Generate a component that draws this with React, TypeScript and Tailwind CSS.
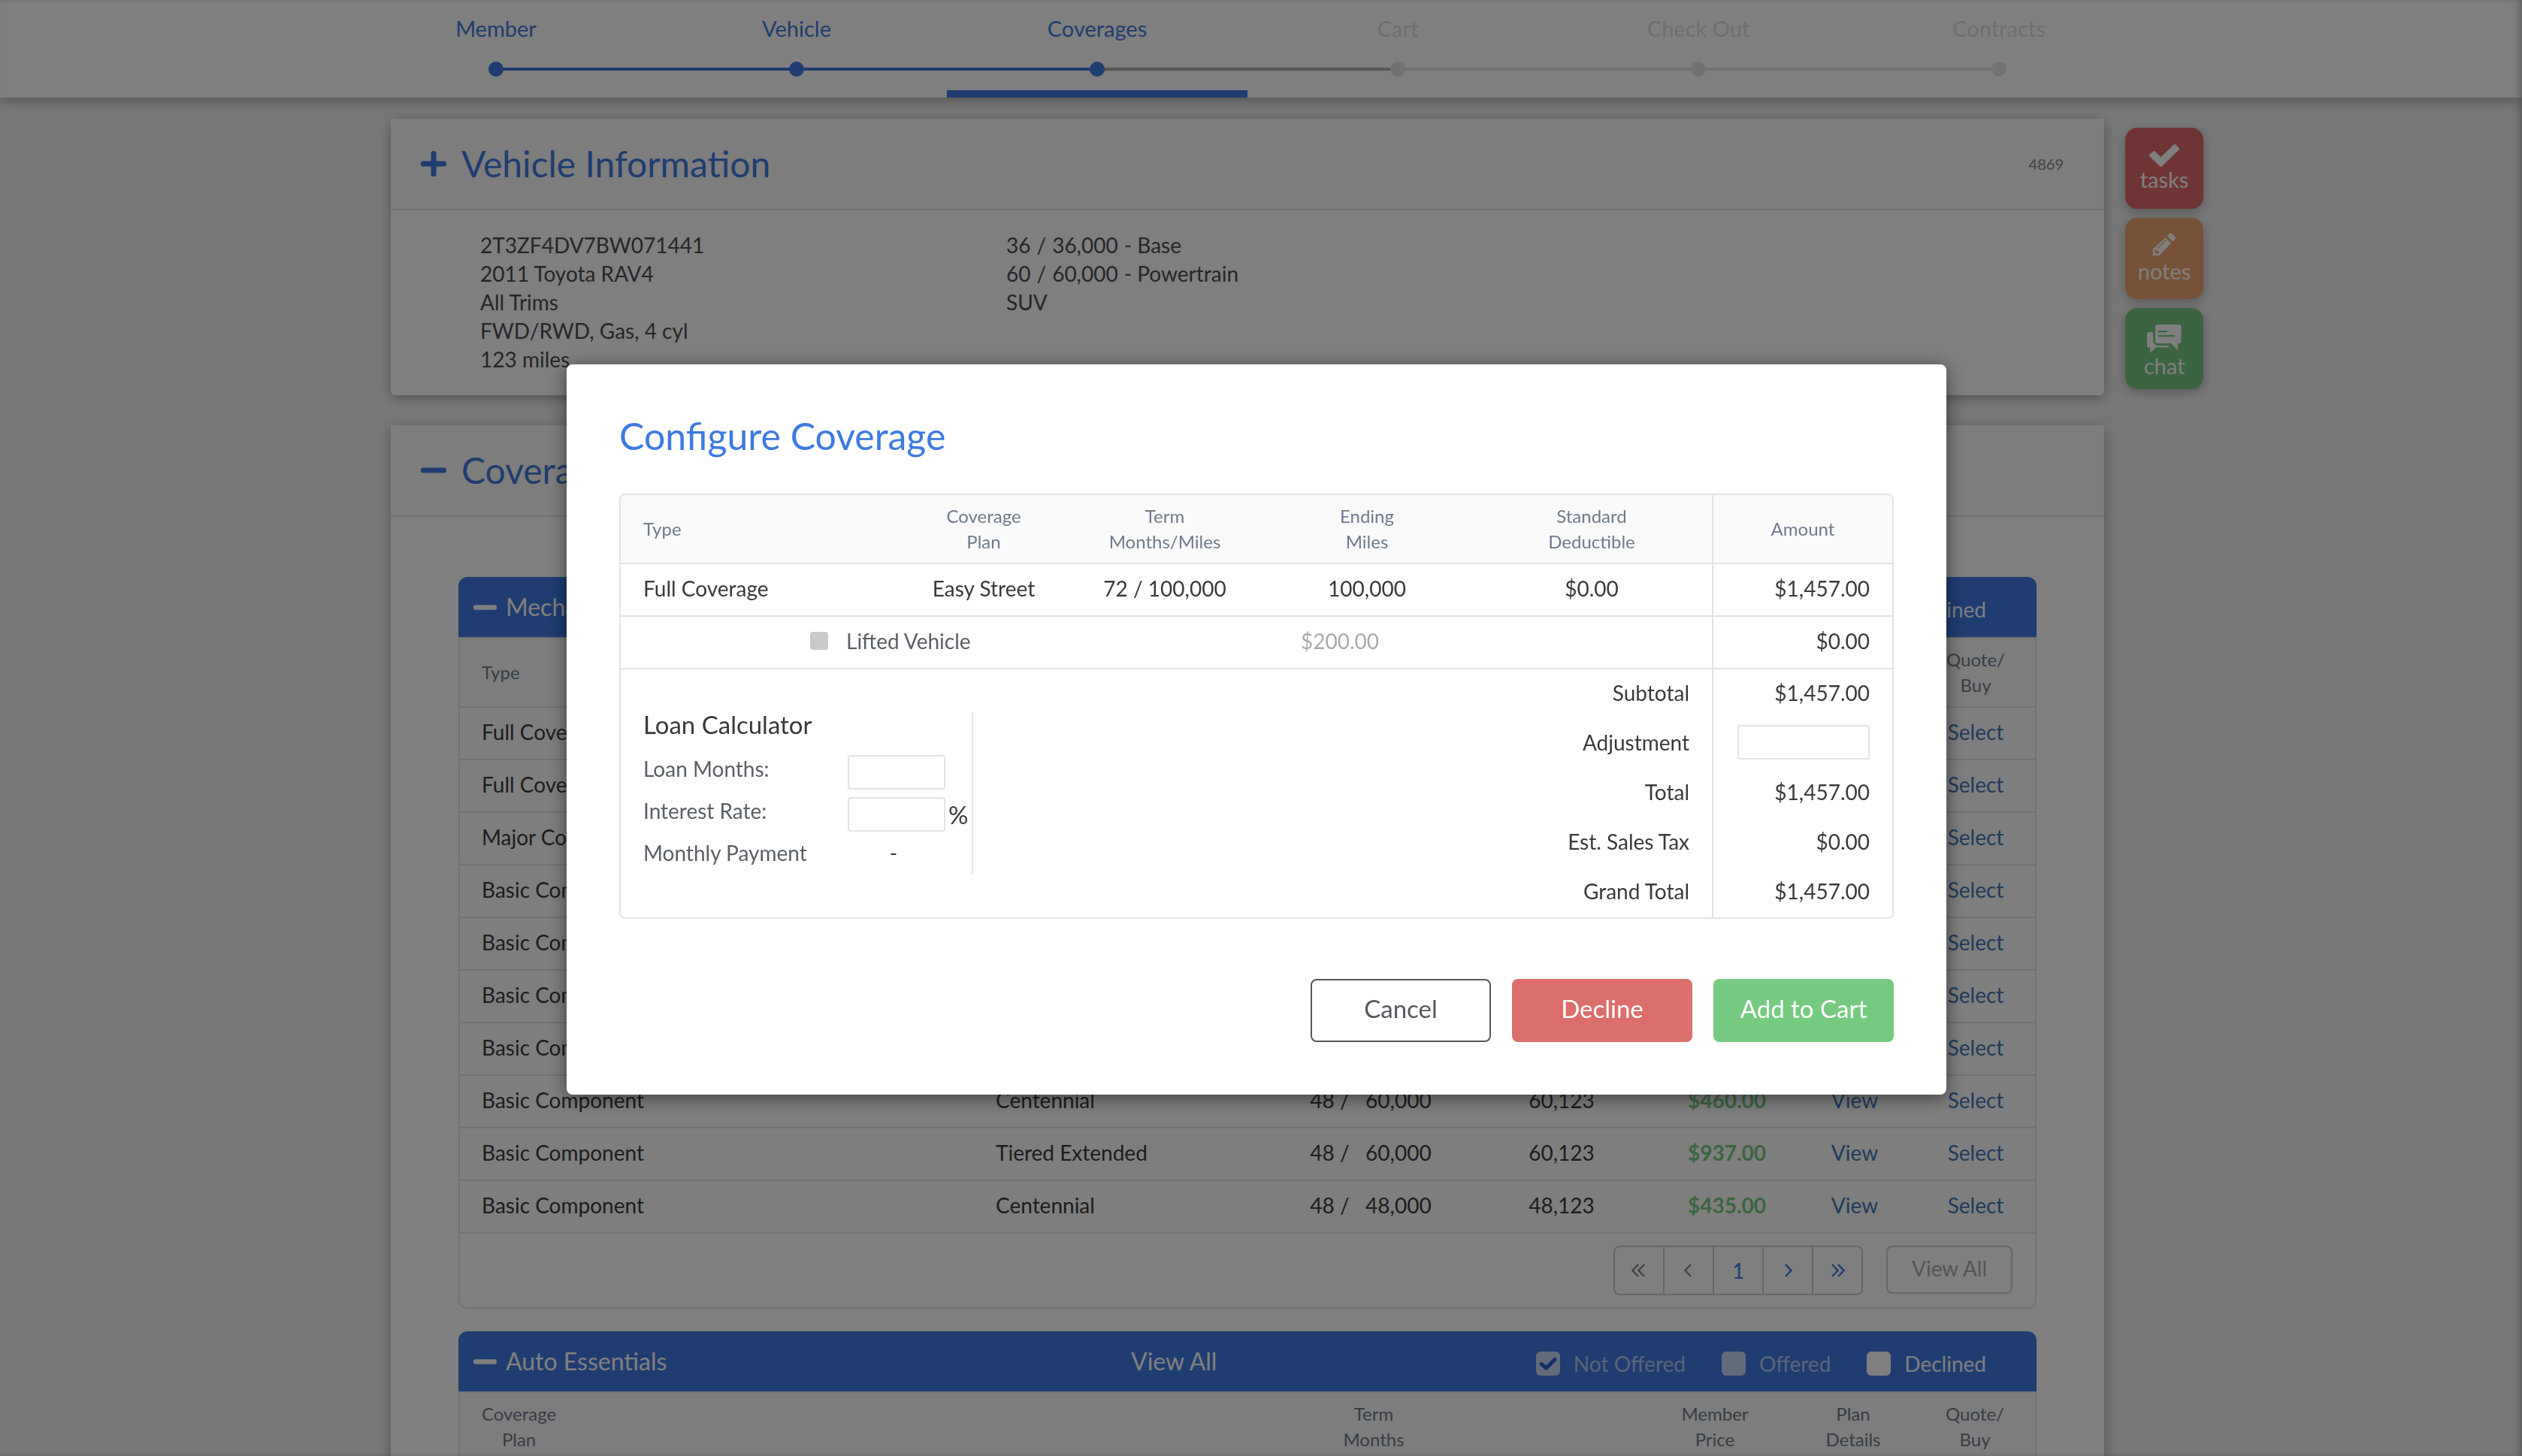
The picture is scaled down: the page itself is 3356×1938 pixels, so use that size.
import React from "react";

const STEPS = [
  { label: "Member", state: "done" },
  { label: "Vehicle", state: "done" },
  { label: "Coverages", state: "current" },
  { label: "Cart", state: "next" },
  { label: "Check Out", state: "todo" },
  { label: "Contracts", state: "todo" },
];

const STEP_LINE: Record<string, string> = {
  done: "bg-[#3e7ae0]",
  current: "bg-[#3e7ae0]",
  next: "bg-[#a8a8a8]",
  todo: "bg-[#e4e4e4]",
};

function Stepper() {
  return (
    <header className="relative z-10 bg-white pr-9 shadow-[0_4px_16px_rgba(0,0,0,0.3)]">
      <nav aria-label="Progress">
        <ol className="mx-auto grid h-[130px] w-full max-w-[2400px] grid-cols-6">
          {STEPS.map((s, i) => {
            const active = s.state === "done" || s.state === "current";
            return (
              <li key={s.label} className="relative flex flex-col items-center pt-5">
                <a
                  href="#"
                  className={`text-[29px] leading-[36px] ${active ? "text-[#3e7ae0]" : "text-[#dedede]"}`}
                >
                  {s.label}
                </a>
                {i > 0 && (
                  <span className={`absolute right-1/2 top-[90px] h-1 w-full ${STEP_LINE[s.state]}`} />
                )}
                <span
                  className={`absolute top-[82px] z-10 size-5 rounded-full ${active ? "bg-[#3e7ae0]" : "bg-[#e4e4e4]"}`}
                />
                {s.state === "current" && (
                  <span className="absolute inset-x-0 bottom-0 h-[10px] bg-[#3e7ae0]" />
                )}
              </li>
            );
          })}
        </ol>
      </nav>
    </header>
  );
}

function PlusIcon() {
  return (
    <svg viewBox="0 0 34 34" className="size-[34px]" fill="currentColor" aria-hidden="true">
      <rect x="0" y="13.5" width="34" height="7" rx="3" />
      <rect x="13.5" y="0" width="7" height="34" rx="3" />
    </svg>
  );
}

function MinusIcon({ className }: { className: string }) {
  return (
    <svg viewBox="0 0 34 34" className={className} fill="currentColor" aria-hidden="true">
      <rect x="0" y="13.5" width="34" height="7" rx="3" />
    </svg>
  );
}

function CardHeader({ open, title, note }: { open: boolean; title: string; note?: string }) {
  return (
    <div className="flex h-[122px] items-center justify-between border-b-2 border-[#e4e4e4] bg-[#fbfbfb] pl-10 pr-[54px]">
      <h2 className="text-[#3e7ae0]">
        <button type="button" className="flex items-center gap-5 text-[48px] leading-[60px]">
          {open ? <MinusIcon className="size-[34px]" /> : <PlusIcon />}
          {title}
        </button>
      </h2>
      {note && <span className="text-[20px] text-[#8a8a8a]">{note}</span>}
    </div>
  );
}

function VehicleCard() {
  return (
    <section className="rounded-b-md bg-white shadow-[0_4px_16px_rgba(0,0,0,0.3)]">
      <CardHeader open={false} title="Vehicle Information" note="4869" />
      <div className="flex pb-[29px] pl-[119px] pt-[27px] text-[28px] leading-[38px] text-[#4a4d52]">
        <div className="w-[700px]">
          <p>2T3ZF4DV7BW071441</p>
          <p>2011 Toyota RAV4</p>
          <p>All Trims</p>
          <p>FWD/RWD, Gas, 4 cyl</p>
          <p>123 miles</p>
        </div>
        <div>
          <p className="flex gap-2"><span>36</span><span>/</span><span>36,000</span><span>- Base</span></p>
          <p className="flex gap-2"><span>60</span><span>/</span><span>60,000</span><span>- Powertrain</span></p>
          <p>SUV</p>
        </div>
      </div>
    </section>
  );
}

function Filter({ label, checked, muted }: { label: string; checked?: boolean; muted?: boolean }) {
  return (
    <label className="flex items-center gap-[18px] text-[28px] leading-[36px] text-white">
      <span className={`grid size-8 ${muted ? "opacity-70" : ""}`}>
        <input
          type="checkbox"
          defaultChecked={checked}
          className="col-start-1 row-start-1 size-8 appearance-none rounded-md bg-white"
        />
        {checked && (
          <svg viewBox="0 0 32 32" className="z-10 col-start-1 row-start-1 size-8 text-[#1f5ac4]" aria-hidden="true">
            <path d="M7 16.500l6.500 5.500L25 10.500" fill="none" stroke="currentColor" strokeWidth="5" strokeLinecap="round" strokeLinejoin="round" />
          </svg>
        )}
      </span>
      <span className={muted ? "opacity-60" : ""}>{label}</span>
    </label>
  );
}

function PanelHeader({ title }: { title: string }) {
  return (
    <div className="grid h-20 grid-cols-[875px_1fr_auto] items-center rounded-t-xl bg-[#3e7ae0] pl-5 pr-[67px] text-white">
      <h3>
        <button type="button" className="flex items-center gap-3 text-[32px] leading-[40px]">
          <MinusIcon className="size-[31px]" />
          {title}
        </button>
      </h3>
      <div>
        <a href="#" className="text-[32px] leading-[40px]">View All</a>
      </div>
      <div className="flex gap-12 pt-1.5">
        <Filter label="Not Offered" checked muted />
        <Filter label="Offered" muted />
        <Filter label="Declined" />
      </div>
    </div>
  );
}

type Row = { type: string; plan?: string; months?: string; miles?: string; end?: string; price?: string };

const ROWS: Row[] = [
  { type: "Full Coverage" },
  { type: "Full Coverage" },
  { type: "Major Component" },
  { type: "Basic Component" },
  { type: "Basic Component" },
  { type: "Basic Component" },
  { type: "Basic Component" },
  { type: "Basic Component", plan: "Centennial", months: "48", miles: "60,000", end: "60,123", price: "$460.00" },
  { type: "Basic Component", plan: "Tiered Extended", months: "48", miles: "60,000", end: "60,123", price: "$937.00" },
  { type: "Basic Component", plan: "Centennial", months: "48", miles: "48,000", end: "48,123", price: "$435.00" },
];

const HEAD = "h-[92px] border-b-2 border-[#e4e4e4] bg-[#fbfbfb] p-0 text-[24px] font-normal leading-[34px] text-[#6f7b8c]";
const CELL = "h-[70px] border-b-2 border-[#e4e4e4] p-0 pb-1 text-[28px] leading-[36px]";
const PAGE = "flex h-full w-[66px] items-center justify-center border-l-2 border-[#cfcfcf] first:w-16 first:border-l-0";

const CHEVRONS = {
  first: "M13 6 5.500 14 13 22M21 6 13.500 14 21 22",
  previous: "M17 6 9.500 14 17 22",
  next: "M11 6 18.500 14 11 22",
  last: "M7 6 14.500 14 7 22M15 6 22.500 14 15 22",
};

function Chevron({ kind }: { kind: keyof typeof CHEVRONS }) {
  return (
    <svg viewBox="0 0 28 28" className="size-7" fill="none" stroke="currentColor" strokeWidth="2.500" aria-hidden="true">
      <path d={CHEVRONS[kind]} />
    </svg>
  );
}

function TwoLine({ a, b }: { a: string; b: string }) {
  return (
    <span className="inline-block text-center">
      {a}
      <br />
      {b}
    </span>
  );
}

function MechanicalPanel() {
  return (
    <div>
      <PanelHeader title="Mechanical" />
      <div className="overflow-hidden rounded-b-xl border-2 border-[#e4e4e4]">
        <table className="w-full table-fixed border-separate border-spacing-0 text-[#3a3a3a]">
          <colgroup>
            <col />
            <col className="w-[404px]" />
            <col className="w-[244px]" />
            <col className="w-[264px]" />
            <col className="w-[176px]" />
            <col className="w-[164px]" />
            <col className="w-[158px]" />
          </colgroup>
          <thead>
            <tr>
              <th className={`${HEAD} pl-[29px] text-left`}>Type</th>
              <th className={HEAD}></th>
              <th className={HEAD}></th>
              <th className={HEAD}></th>
              <th className={HEAD}></th>
              <th className={HEAD}></th>
              <th className={HEAD}><TwoLine a="Quote/" b="Buy" /></th>
            </tr>
          </thead>
          <tbody>
            {ROWS.map((r, i) => (
              <tr key={i} className="bg-[#fdfdfd]">
                <td className={`${CELL} pl-[29px]`}>{r.type}</td>
                <td className={`${CELL} pl-[27px]`}>{r.plan}</td>
                <td className={`${CELL} whitespace-pre text-center`}>{r.months && `${r.months} /   ${r.miles}`}</td>
                <td className={`${CELL} text-center`}>{r.end}</td>
                <td className={`${CELL} text-center font-bold text-[#77cb80]`}>{r.price}</td>
                <td className={`${CELL} text-center text-[#3f77b8]`}>{r.plan && <a href="#">View</a>}</td>
                <td className={`${CELL} text-center text-[#3f77b8]`}><a href="#">Select</a></td>
              </tr>
            ))}
          </tbody>
        </table>
        <div className="flex h-[98px] justify-end gap-[31px] bg-white pr-[30px] pt-4">
          <div className="flex h-[66px] overflow-hidden rounded-lg border-2 border-[#cfcfcf] text-[28px] text-[#3e7ae0]">
            <button type="button" aria-label="First page" className={`${PAGE} text-[#8a8a8a]`}><Chevron kind="first" /></button>
            <button type="button" aria-label="Previous page" className={`${PAGE} text-[#8a8a8a]`}><Chevron kind="previous" /></button>
            <button type="button" className={PAGE}>1</button>
            <button type="button" aria-label="Next page" className={PAGE}><Chevron kind="next" /></button>
            <button type="button" aria-label="Last page" className={PAGE}><Chevron kind="last" /></button>
          </div>
          <button type="button" className="h-16 w-[168px] rounded-lg border-2 border-[#cfcfcf] pb-1 text-[28px] text-[#ababab]">
            View All
          </button>
        </div>
      </div>
    </div>
  );
}

function EssentialsPanel() {
  return (
    <div>
      <PanelHeader title="Auto Essentials" />
      <div className="border-2 border-[#e4e4e4]">
        <table className="w-full table-fixed border-separate border-spacing-0">
          <colgroup>
            <col />
            <col className="w-[244px]" />
            <col className="w-[230px]" />
            <col className="w-[204px]" />
            <col className="w-[164px]" />
            <col className="w-[160px]" />
          </colgroup>
          <thead>
            <tr>
              <th className={`${HEAD} pl-[29px] text-left`}><TwoLine a="Coverage" b="Plan" /></th>
              <th className={HEAD}><TwoLine a="Term" b="Months" /></th>
              <th className={HEAD}></th>
              <th className={HEAD}><TwoLine a="Member" b="Price" /></th>
              <th className={HEAD}><TwoLine a="Plan" b="Details" /></th>
              <th className={HEAD}><TwoLine a="Quote/" b="Buy" /></th>
            </tr>
          </thead>
        </table>
      </div>
    </div>
  );
}

const SIDE = "flex h-[108px] w-[104px] flex-col items-center justify-center rounded-2xl text-[29px] leading-[34px] text-white shadow-[0_4px_14px_rgba(0,0,0,0.25)]";

function SideButtons() {
  return (
    <aside className="flex flex-col gap-3 pl-7 pt-3">
      <button type="button" className={`${SIDE} bg-[#dc6b69]`}>
        <svg viewBox="0 0 40 30" className="h-[30px] w-10" fill="currentColor" aria-hidden="true">
          <path d="M.6 13.6 5 9.4a1.8 1.8 0 0 1 2.500 0L15.500 17 32.600.6a1.800 1.800 0 0 1 2.500 0L39.400 5a1.800 1.800 0 0 1 0 2.500L17 29.300a2 2 0 0 1-3 0L.6 16.200a1.800 1.800 0 0 1 0-2.600Z" />
        </svg>
        tasks
      </button>
      <button type="button" className={`${SIDE} bg-[#f0a56c]`}>
        <svg viewBox="0 0 30 30" className="mb-1 size-[30px]" fill="currentColor" aria-hidden="true">
          <path d="M21.500.9a2.500 2.500 0 0 1 3.500 0L29.200 5a2.500 2.500 0 0 1 0 3.500l-3 3-7.700-7.700Z" />
          <path
            fillRule="evenodd"
            d="M16.500 6.300 24 13.700 8.500 30H0v-8.500ZM17 8.500 5.500 20l1 1L18 9.500ZM2.500 22.500 2 26l2.500 1.800 4-.8-.5-2.500-2.500.2.200-2.200Z"
          />
        </svg>
        notes
      </button>
      <button type="button" className={`${SIDE} bg-[#77cb80]`}>
        <svg viewBox="0 0 46 38" className="mt-2 h-[38px] w-[46px]" fill="currentColor" aria-hidden="true">
          <path
            fillRule="evenodd"
            d="M14 0h28.500A3 3 0 0 1 45.500 3v19a3 3 0 0 1-3 3H41v9l-9-9H14a3 3 0 0 1-3-3V3a3 3 0 0 1 3-3Zm1 8v2.200h12V8Zm0 6v2.200h22V14Z"
          />
          <path d="M8 10H3a3 3 0 0 0-3 3v14.500a3 3 0 0 0 3 3h1V38l8-7.500h15a2 2 0 0 0 2-2V28H14a6 6 0 0 1-6-6Z" />
        </svg>
        chat
      </button>
    </aside>
  );
}

const M_HEAD = "h-[92px] border-b-2 border-[#e4e4e4] bg-[#fafafa] p-0 text-[24px] font-normal leading-[34px] text-[#6f7b8c]";
const M_CELL = "h-[70px] border-b-2 border-[#e4e4e4] p-0 pb-1 text-[28px] leading-[36px]";
const M_LABEL = "h-[66px] p-0 pb-1 pr-[30px] text-right text-[28px] font-normal leading-[36px]";
const M_AMOUNT = "h-[66px] border-l-2 border-[#e4e4e4] p-0 pb-1 pr-[30px] text-right text-[28px] leading-[36px]";
const FIELD = "h-[46px] rounded border-2 border-[#e4e4e4] bg-white px-2 text-[26px] outline-none";
const ACTION = "h-[84px] w-60 rounded-lg pb-1 text-[33px]";

function LoanCalculator() {
  return (
    <div className="mt-[57px] h-[216px] w-[469px] border-r-2 border-[#e4e4e4] pl-[30px] text-[28px] text-[#5a5f66]">
      <h3 className="pb-[25px] text-[33px] leading-[32px] text-[#3a3a3a]">Loan Calculator</h3>
      <div className="grid grid-cols-[272px_130px_auto] gap-y-[10px]">
        <label htmlFor="months" className="leading-[36px]">Loan Months:</label>
        <input id="months" type="text" className={FIELD} />
        <span />
        <label htmlFor="rate" className="leading-[36px]">Interest Rate:</label>
        <input id="rate" type="text" className={FIELD} />
        <span className="pl-1 text-[33px] leading-[46px] text-[#3a3a3a]">%</span>
        <span className="leading-[36px]">Monthly Payment</span>
        <span className="pr-2 text-center leading-[36px] text-[#3a3a3a]">-</span>
      </div>
    </div>
  );
}

function ConfigureModal() {
  return (
    <div className="fixed inset-0 z-20 flex items-center justify-center bg-black/50 pr-3 shadow-[inset_-6px_0_12px_-4px_rgba(0,0,0,0.3)]">
      <div
        role="dialog"
        aria-modal="true"
        aria-labelledby="modal-title"
        className="mt-1 w-[1836px] max-w-full rounded-lg bg-white px-[70px] pb-[70px] pt-[65px] shadow-[0_4px_24px_rgba(0,0,0,0.5)]"
      >
        <h2 id="modal-title" className="text-[50px] leading-[60px] text-[#3e7ae0]">Configure Coverage</h2>
        <div className="mt-[47px] overflow-hidden rounded-lg border-2 border-[#e4e4e4]">
          <table className="w-full table-fixed border-separate border-spacing-0 text-[#3a3a3a]">
            <colgroup>
              <col />
              <col className="w-[222px]" />
              <col className="w-[260px]" />
              <col className="w-[278px]" />
              <col className="w-[320px]" />
              <col className="w-[240px]" />
            </colgroup>
            <thead>
              <tr>
                <th className={`${M_HEAD} pl-[30px] text-left`}>Type</th>
                <th className={M_HEAD}><TwoLine a="Coverage" b="Plan" /></th>
                <th className={M_HEAD}><TwoLine a="Term" b="Months/Miles" /></th>
                <th className={M_HEAD}><TwoLine a="Ending" b="Miles" /></th>
                <th className={M_HEAD}><TwoLine a="Standard" b="Deductible" /></th>
                <th className={`${M_HEAD} border-l-2`}>Amount</th>
              </tr>
            </thead>
            <tbody>
              <tr>
                <td className={`${M_CELL} pl-[30px]`}>Full Coverage</td>
                <td className={`${M_CELL} text-center`}>Easy Street</td>
                <td className={`${M_CELL} text-center`}>72 / 100,000</td>
                <td className={`${M_CELL} text-center`}>100,000</td>
                <td className={`${M_CELL} text-center`}>$0.00</td>
                <td className={`${M_CELL} border-l-2 pr-[30px] text-right`}>$1,457.00</td>
              </tr>
              <tr>
                <td colSpan={3} className={`${M_CELL} pl-[252px]`}>
                  <label className="flex items-center gap-6 text-[#5a5f66]">
                    <input type="checkbox" className="size-6 appearance-none rounded bg-[#cacaca]" />
                    Lifted Vehicle
                  </label>
                </td>
                <td className={`${M_CELL} pr-[72px] text-center text-[#ababab]`}>$200.00</td>
                <td className={M_CELL}></td>
                <td className={`${M_CELL} border-l-2 pr-[30px] text-right`}>$0.00</td>
              </tr>
              <tr>
                <td rowSpan={5} colSpan={4} className="p-0 align-top"><LoanCalculator /></td>
                <th scope="row" className={M_LABEL}>Subtotal</th>
                <td className={M_AMOUNT}>$1,457.00</td>
              </tr>
              <tr>
                <th scope="row" className={M_LABEL}><label htmlFor="adjustment">Adjustment</label></th>
                <td className={M_AMOUNT}>
                  <input id="adjustment" type="text" className={`${FIELD} w-44 align-middle`} />
                </td>
              </tr>
              <tr>
                <th scope="row" className={M_LABEL}>Total</th>
                <td className={M_AMOUNT}>$1,457.00</td>
              </tr>
              <tr>
                <th scope="row" className={M_LABEL}>Est. Sales Tax</th>
                <td className={M_AMOUNT}>$0.00</td>
              </tr>
              <tr>
                <th scope="row" className={M_LABEL}>Grand Total</th>
                <td className={M_AMOUNT}>$1,457.00</td>
              </tr>
            </tbody>
          </table>
        </div>
        <div className="mt-20 flex justify-end gap-7">
          <button type="button" className={`${ACTION} border-2 border-[#54585e] text-[#54585e]`}>Cancel</button>
          <button type="button" className={`${ACTION} bg-[#dc6e6b] text-white`}>Decline</button>
          <button type="button" className={`${ACTION} bg-[#77cb80] text-white`}>Add to Cart</button>
        </div>
      </div>
    </div>
  );
}

export default function App() {
  return (
    <div className="h-screen overflow-hidden bg-[#efefef] font-['Lato',sans-serif]">
      <Stepper />
      <div className="grid grid-cols-[1fr_minmax(0,2280px)_1fr] pr-9 pt-7">
        <div />
        <main className="flex flex-col gap-10">
          <VehicleCard />
          <section className="bg-white shadow-[0_4px_16px_rgba(0,0,0,0.3)]">
            <CardHeader open title="Coverages" />
            <div className="flex flex-col gap-[30px] px-[90px] py-20">
              <MechanicalPanel />
              <EssentialsPanel />
            </div>
          </section>
        </main>
        <SideButtons />
      </div>
      <ConfigureModal />
    </div>
  );
}
